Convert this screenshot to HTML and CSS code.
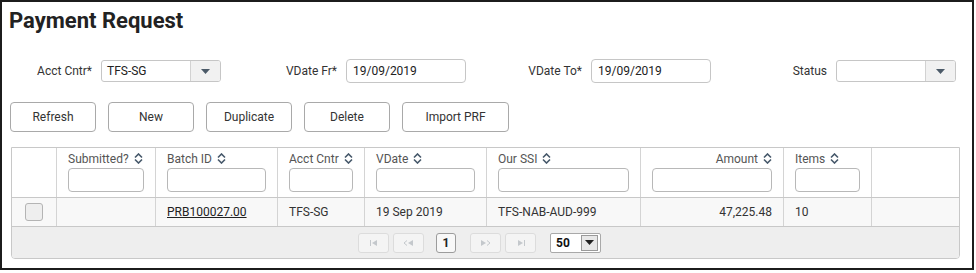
FILE: index.html
```html
<!DOCTYPE html>
<html>
<head>
<meta charset="utf-8">
<link rel="stylesheet" href="styles.css">
</head>
<body>
<div class="frame">
  <h1 class="title">Payment Request</h1>

  <div class="filters">
    <div class="field">
      <label class="flabel">Acct Cntr*</label>
      <div class="combo">
        <span class="combo-val">TFS-SG</span>
        <span class="combo-btn"><svg width="9" height="5" viewBox="0 0 9 5"><path d="M0 0h9L4.5 5z" fill="#4b5a68"/></svg></span>
      </div>
    </div>
    <div class="field">
      <label class="flabel">VDate Fr*</label>
      <input class="tinput" type="text" value="19/09/2019">
    </div>
    <div class="field">
      <label class="flabel">VDate To*</label>
      <input class="tinput" type="text" value="19/09/2019">
    </div>
    <div class="field">
      <label class="flabel">Status</label>
      <div class="combo">
        <span class="combo-val"></span>
        <span class="combo-btn"><svg width="9" height="5" viewBox="0 0 9 5"><path d="M0 0h9L4.5 5z" fill="#4b5a68"/></svg></span>
      </div>
    </div>
  </div>

  <div class="actions">
    <button class="btn">Refresh</button>
    <button class="btn">New</button>
    <button class="btn">Duplicate</button>
    <button class="btn">Delete</button>
    <button class="btn btn-wide">Import PRF</button>
  </div>

  <div class="grid">
    <div class="row head">
      <div class="cell c0"></div>
      <div class="cell c1"><div class="hl">Submitted? <svg class="sort" width="9" height="11" viewBox="0 0 9 11"><path d="M1 4.5L4.5 1L8 4.5M1 6.5L4.5 10L8 6.5" fill="none" stroke="#46586a" stroke-width="1.6"/></svg></div><input class="finput"></div>
      <div class="cell c2"><div class="hl">Batch ID <svg class="sort" width="9" height="11" viewBox="0 0 9 11"><path d="M1 4.5L4.5 1L8 4.5M1 6.5L4.5 10L8 6.5" fill="none" stroke="#46586a" stroke-width="1.6"/></svg></div><input class="finput"></div>
      <div class="cell c3"><div class="hl">Acct Cntr <svg class="sort" width="9" height="11" viewBox="0 0 9 11"><path d="M1 4.5L4.5 1L8 4.5M1 6.5L4.5 10L8 6.5" fill="none" stroke="#46586a" stroke-width="1.6"/></svg></div><input class="finput"></div>
      <div class="cell c4"><div class="hl">VDate <svg class="sort" width="9" height="11" viewBox="0 0 9 11"><path d="M1 4.5L4.5 1L8 4.5M1 6.5L4.5 10L8 6.5" fill="none" stroke="#46586a" stroke-width="1.6"/></svg></div><input class="finput"></div>
      <div class="cell c5"><div class="hl">Our SSI <svg class="sort" width="9" height="11" viewBox="0 0 9 11"><path d="M1 4.5L4.5 1L8 4.5M1 6.5L4.5 10L8 6.5" fill="none" stroke="#46586a" stroke-width="1.6"/></svg></div><input class="finput"></div>
      <div class="cell c6"><div class="hl right">Amount <svg class="sort" width="9" height="11" viewBox="0 0 9 11"><path d="M1 4.5L4.5 1L8 4.5M1 6.5L4.5 10L8 6.5" fill="none" stroke="#46586a" stroke-width="1.6"/></svg></div><input class="finput"></div>
      <div class="cell c7"><div class="hl">Items <svg class="sort" width="9" height="11" viewBox="0 0 9 11"><path d="M1 4.5L4.5 1L8 4.5M1 6.5L4.5 10L8 6.5" fill="none" stroke="#46586a" stroke-width="1.6"/></svg></div><input class="finput"></div>
      <div class="cell c8"></div>
    </div>
    <div class="row data">
      <div class="cell c0"><span class="chk"></span></div>
      <div class="cell c1"></div>
      <div class="cell c2"><a class="link" href="#">PRB100027.00</a></div>
      <div class="cell c3">TFS-SG</div>
      <div class="cell c4">19 Sep 2019</div>
      <div class="cell c5">TFS-NAB-AUD-999</div>
      <div class="cell c6 num">47,225.48</div>
      <div class="cell c7">10</div>
      <div class="cell c8"></div>
    </div>
    <div class="pager">
      <span class="pbtn dis"><svg width="8" height="6" viewBox="0 0 8 6"><path d="M0.5 0v6" stroke="#c4c8cc" stroke-width="1"/><path d="M7 0v6L2 3z" fill="#c4c8cc"/></svg></span>
      <span class="pbtn dis"><svg width="11" height="6" viewBox="0 0 11 6"><path d="M4 0.5L1 3l3 2.5" fill="none" stroke="#c4c8cc" stroke-width="1"/><path d="M10 0v6L5 3z" fill="#c4c8cc"/></svg></span>
      <span class="pbtn page">1</span>
      <span class="pbtn dis gapl"><svg width="11" height="6" viewBox="0 0 11 6"><path d="M1 0v6l5-3z" fill="#c4c8cc"/><path d="M7 0.5L10 3 7 5.5" fill="none" stroke="#c4c8cc" stroke-width="1"/></svg></span>
      <span class="pbtn dis"><svg width="8" height="6" viewBox="0 0 8 6"><path d="M1 0v6l5-3z" fill="#c4c8cc"/><path d="M7.5 0v6" stroke="#c4c8cc" stroke-width="1"/></svg></span>
      <span class="psize"><span class="psize-val">50</span><span class="psize-btn"><svg width="9" height="5" viewBox="0 0 9 5"><path d="M0 0h9L4.5 5z" fill="#222"/></svg></span></span>
    </div>
  </div>
</div>
</body>
</html>
```

FILE: styles.css
```css
* { box-sizing: border-box; }
html, body { margin: 0; padding: 0; background: #fff; }
body { font-family: Roboto, "Liberation Sans", sans-serif; font-size: 12px; color: #333; }

.frame {
  width: 974px;
  height: 270px;
  border: 2px solid #1c1c1c;
  padding: 6px 0 0 7px;
}

.title {
  margin: 0;
  font-size: 22px;
  line-height: 26px;
  font-weight: 700;
  color: #222;
}

.filters {
  display: grid;
  grid-template-columns: repeat(4, 245px);
  margin-top: 25px;
  height: 24px;
}
.field { display: flex; align-items: center; }
.flabel {
  text-align: right;
  padding-right: 9px;
  width: 92px;
  color: #333;
}
.combo {
  width: 120px;
  height: 22px;
  border: 1px solid #c6c6c6;
  border-radius: 3px;
  display: flex;
  overflow: hidden;
  background: #fff;
}
.combo-val { flex: 1; padding-left: 5px; line-height: 20px; color: #222; }
.combo-btn {
  width: 30px;
  border-left: 1px solid #d2d2d2;
  background: #f1f1f1;
  display: flex;
  align-items: center;
  justify-content: center;
}
.tinput {
  width: 120px;
  height: 24px;
  border: 1px solid #c6c6c6;
  border-radius: 4px;
  padding: 0 0 0 6px;
  font: inherit;
  color: #222;
  outline: none;
}

.actions {
  display: flex;
  gap: 12px;
  margin-top: 19px;
  padding-left: 1px;
}
.btn {
  width: 86px;
  height: 30px;
  background: #fff;
  border: 1px solid #a9a9a9;
  border-radius: 4px;
  font: inherit;
  color: #333;
  padding: 0;
}
.btn-wide { width: 107px; }

.grid {
  margin-top: 15px;
  margin-left: 2px;
  width: 949px;
  border: 1px solid #c8c8c8;
  border-radius: 0 0 4px 4px;
}
.row { display: flex; border-bottom: 1px solid #c8c8c8; }
.cell { border-right: 1px solid #d4d4d4; padding: 0 11px; }
.cell:last-child { border-right: none; }
.c0 { width: 45px; }
.c1 { width: 99px; }
.c2 { width: 122px; }
.c3 { width: 87px; }
.c4 { width: 122px; }
.c5 { width: 154px; }
.c6 { width: 143px; }
.c7 { width: 88px; }
.c8 { width: 87px; }

.head { height: 50px; background: #fff; }
.head .cell { padding-top: 3px; }
.hl { color: #555; line-height: 16px; height: 17px; white-space: nowrap; }
.hl.right { text-align: right; }
.sort { vertical-align: -1px; margin-left: 2px; }
.finput {
  display: block;
  width: 100%;
  height: 24px;
  border: 1px solid #b8b8b8;
  border-radius: 4px;
  font: inherit;
  outline: none;
  background: #fff;
}

.data { height: 29px; background: #f8f8f8; }
.data .cell { line-height: 28px; color: #333; }
.data .c0 { display: flex; align-items: center; justify-content: center; }
.chk {
  width: 18px; height: 18px;
  border: 1px solid #b4b4b4;
  border-radius: 3px;
  background: #eeeeee;
}
.link { color: #222; text-decoration: underline; }
.num { text-align: right; }

.pager {
  height: 31px;
  background: #eeeeee;
  border-radius: 0 0 3px 3px;
  display: flex;
  align-items: center;
  padding-left: 346px;
}
.pbtn {
  width: 31px;
  height: 20px;
  border: 1px solid #dcdcdc;
  border-radius: 3px;
  background: #f4f4f4;
  display: flex;
  align-items: center;
  justify-content: center;
  margin-right: 4px;
}
.pbtn.page {
  width: 20px;
  border-color: #9c9c9c;
  background: #f8f8f8;
  font-weight: 700;
  color: #222;
  margin-left: 8px;
  margin-right: 14px;
}
.psize {
  margin-left: 10px;
  width: 51px;
  height: 20px;
  border: 1px solid #a9a9a9;
  border-radius: 2px;
  background: #fff;
  display: flex;
}
.psize-val { flex: 1; font-weight: 700; color: #111; padding-left: 5px; line-height: 18px; font-size: 12px; }
.psize-btn {
  width: 17px; height: 16px; margin: 1px 2px 1px 0;
  background: #e8e8e8;
  border: 1px solid #9a9a9a;
  display: flex; align-items: center; justify-content: center;
}
```
